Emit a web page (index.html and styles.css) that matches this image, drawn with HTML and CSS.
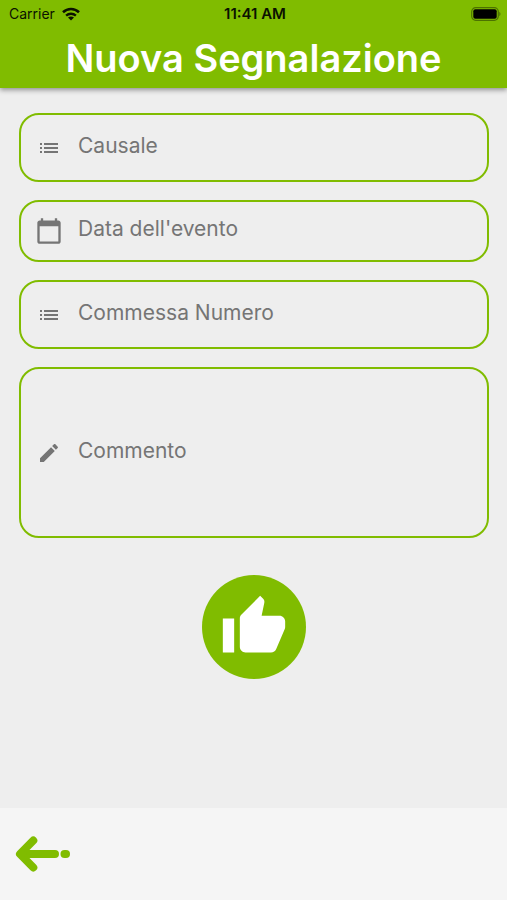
FILE: index.html
```html
<!DOCTYPE html>
<html lang="it">
<head>
<meta charset="utf-8">
<meta name="viewport" content="width=device-width, initial-scale=1">
<title>Nuova Segnalazione</title>
<link rel="stylesheet" href="styles.css">
</head>
<body>
<header class="header">
  <div class="status">
    <div class="carrier">
      <span>Carrier</span>
      <svg width="18" height="14" viewBox="0 0 18 14" fill="none" stroke="#0b1200" stroke-width="2.600" aria-hidden="true">
        <path d="M1 5.200C5.600.9 12.400.9 17 5.200"/>
        <path d="M4.100 8.600c2.800-2.500 7-2.500 9.800 0" stroke-width="2.400"/>
        <path d="M9 13.600 6 10.600c1.700-1.500 4.300-1.500 6 0z" fill="#0b1200" stroke="none"/>
      </svg>
    </div>
    <time class="clock">11:41 AM</time>
    <svg class="battery" width="30" height="14" viewBox="0 0 30 14" aria-hidden="true">
      <rect x=".7" y=".7" width="26.600" height="12.600" rx="4" fill="none" stroke="#4c7200" stroke-width="1.200"/>
      <rect x="2.300" y="2.300" width="23.400" height="9.400" rx="2" fill="#000"/>
      <path d="M28.300 4.800c1.600.7 1.600 3.700 0 4.400z" fill="#4c7200"/>
    </svg>
  </div>
  <h1 class="title">Nuova Segnalazione</h1>
</header>
<main class="main">
  <form class="form">
    <label class="field">
      <svg class="icon" viewBox="0 0 24 24" aria-hidden="true"><path d="M3 13h2v-2H3v2zm0 4h2v-2H3v2zm0-8h2V7H3v2zm4 4h14v-2H7v2zm0 4h14v-2H7v2zM7 7v2h14V7H7z"/></svg>
      <select class="control" aria-label="Causale"><option>Causale</option></select>
    </label>
    <label class="field field-date">
      <svg class="icon icon-large" viewBox="0 0 24 24" aria-hidden="true"><path d="M20 3h-1V1h-2v2H7V1H5v2H4c-1.100 0-2 .9-2 2v16c0 1.100.9 2 2 2h16c1.100 0 2-.9 2-2V5c0-1.100-.9-2-2-2zm0 18H4V8h16v13z"/></svg>
      <input class="control" type="text" placeholder="Data dell'evento" aria-label="Data dell'evento">
    </label>
    <label class="field">
      <svg class="icon" viewBox="0 0 24 24" aria-hidden="true"><path d="M3 13h2v-2H3v2zm0 4h2v-2H3v2zm0-8h2V7H3v2zm4 4h14v-2H7v2zm0 4h14v-2H7v2zM7 7v2h14V7H7z"/></svg>
      <select class="control" aria-label="Commessa Numero"><option>Commessa Numero</option></select>
    </label>
    <label class="field field-comment">
      <svg class="icon" viewBox="0 0 24 24" aria-hidden="true"><path d="M3 17.250V21h3.750L17.810 9.940l-3.750-3.750L3 17.250zM20.710 7.040c.39-.39.39-1.020 0-1.410l-2.340-2.340c-.39-.39-1.020-.39-1.410 0l-1.830 1.830 3.750 3.750 1.830-1.830z"/></svg>
      <textarea class="control" rows="1" placeholder="Commento" aria-label="Commento"></textarea>
    </label>
    <button class="send" type="button" aria-label="Invia">
      <svg width="68" height="68" viewBox="0 0 24 24" fill="#fff" aria-hidden="true"><path d="M1 21h4V9H1v12zm22-11c0-1.100-.9-2-2-2h-6.310l.95-4.570.03-.32c0-.41-.17-.79-.44-1.060L14.170 1 7.590 7.590C7.220 7.950 7 8.450 7 9v10c0 1.100.9 2 2 2h9c.83 0 1.540-.5 1.840-1.220l3.020-7.050c.09-.23.14-.47.14-.73v-2z"/></svg>
    </button>
  </form>
</main>
<footer class="footer">
  <button class="back" type="button" aria-label="Indietro">
    <svg width="56" height="36" viewBox="0 0 56 36" fill="none" stroke="#80bc00" stroke-width="8" stroke-linecap="round" stroke-linejoin="round" aria-hidden="true">
      <path d="M18.300 4.500 5 18l13.300 13.500M6 18h34"/>
      <path d="M8 14.500 12 18l-4 3.500z" fill="#80bc00" stroke="none"/>
      <path d="M49.500 18h1.500"/>
    </svg>
  </button>
</footer>
</body>
</html>
```
FILE: styles.css
```css
* {
  box-sizing: border-box;
}

body {
  margin: 0;
  min-height: 100vh;
  display: flex;
  flex-direction: column;
  background: #eeeeee;
  font-family: Inter, "Liberation Sans", sans-serif;
}

.header {
  background: #80bc00;
  box-shadow: 0 2px 5px rgba(0, 0, 0, 0.4);
  padding-bottom: 6px;
}

.status {
  display: grid;
  grid-template-columns: 1fr auto 1fr;
  align-items: center;
  height: 28px;
  padding: 0 6px 0 9px;
  color: #0b1200;
  font-size: 14px;
  line-height: 20px;
}

.carrier {
  display: flex;
  align-items: center;
  gap: 7px;
}

.clock {
  font-size: 15px;
  font-weight: 600;
}

.battery {
  justify-self: end;
}

.title {
  margin: 0;
  padding-top: 6px;
  color: #fff;
  font-size: 38px;
  font-weight: 600;
  line-height: 48px;
  text-align: center;
}

.main {
  flex: 1;
  padding: 25px 18px 24px 19px;
}

.form {
  display: flex;
  flex-direction: column;
  gap: 18px;
}

.field {
  display: flex;
  align-items: center;
  gap: 13px;
  min-height: 69px;
  padding: 0 14px;
  border: 2px solid #80bc00;
  border-radius: 20px;
}

.field-date {
  min-height: 62px;
}

.field-comment {
  min-height: 171px;
}

.icon {
  flex: none;
  width: 28px;
  height: 24px;
  fill: #757575;
}

.icon-large {
  height: 28px;
}

.control {
  flex: 1;
  min-width: 0;
  height: 32px;
  margin: 0 0 4px;
  padding: 0 2px;
  border: 0;
  outline: 0;
  appearance: none;
  resize: none;
  background: transparent;
  color: #757575;
  font: 400 21px/32px Inter, "Liberation Sans", sans-serif;
}

.control::placeholder {
  color: #757575;
  opacity: 1;
}

.send {
  display: grid;
  place-items: center;
  align-self: center;
  width: 104px;
  height: 104px;
  margin-top: 19px;
  padding: 0;
  border: 0;
  border-radius: 50%;
  background: #80bc00;
}

.footer {
  display: flex;
  align-items: center;
  height: 92px;
  padding: 0 15px;
  background: #f5f5f5;
}

.back {
  display: flex;
  padding: 0;
  border: 0;
  background: transparent;
}
```
